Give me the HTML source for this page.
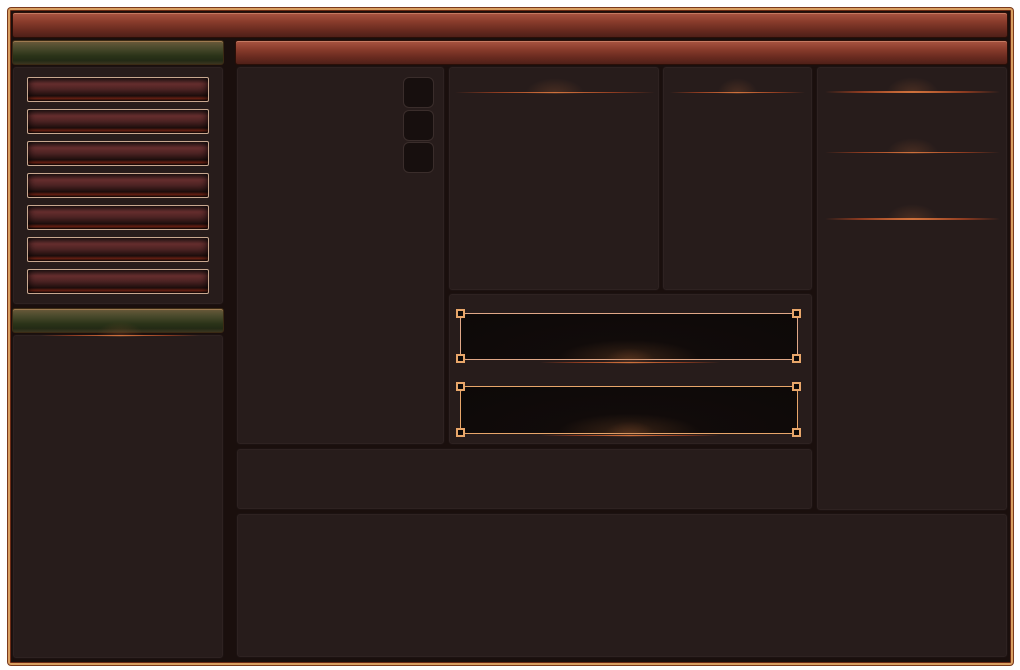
<!DOCTYPE html>
<html><head><meta charset="utf-8"><style>
*{margin:0;padding:0;box-sizing:border-box}
body{width:1020px;height:670px;background:#fff;position:relative;overflow:hidden;font-family:"Liberation Sans",sans-serif}
.a{position:absolute}
.frame{left:8px;top:8px;width:1005px;height:657px;background:#1a0f0d;border:2px solid #d9a062;box-shadow:0 0 0 1px #7a3a1c, inset 0 0 0 1px #6b2a14;border-radius:3px}
.p{position:absolute;background:#271c1b;border:1px solid #1c1211;border-radius:4px;box-shadow:inset 0 0 0 1px #2e2221}
.hdr{position:absolute;border-radius:3px;border:1px solid #2a0f08}
.red{background:linear-gradient(#a95441 0%,#8a3c2c 35%,#6a2b20 70%,#4f2018 100%);box-shadow:inset 0 1px 0 #c57a62}
.green{background:linear-gradient(#6b5a3a 0%,#4a4a2c 30%,#2a3318 65%,#232a15 85%,#3b3520 100%);box-shadow:inset 0 1px 0 #9d7a50;border-color:#3a2a14}
.btn{position:absolute;left:27px;width:182px;height:25px;border:1px solid #c8a890;border-radius:2px;background:linear-gradient(#3a2020 0%,#6a3030 25%,#4a2222 50%,#1e0e0d 78%,#8a2a18 90%,#1a0c0b 100%);box-shadow:inset 0 0 8px #000}
.sq{position:absolute;left:403px;width:31px;height:31px;background:#170f0e;border:1px solid #3a2d2b;border-radius:6px}
.glow{position:absolute;height:2px;background:linear-gradient(90deg,transparent,#8a3a20 20%,#e07a40 50%,#8a3a20 80%,transparent)}
.glow:before{content:"";position:absolute;left:35%;width:30%;top:-14px;height:16px;background:radial-gradient(ellipse at bottom,rgba(160,90,50,.3),transparent 70%)}
.box{position:absolute;left:460px;width:338px;background:radial-gradient(ellipse at 50% 100%,#3a2416 0%,#110b0a 30%,#0d0908 100%);border:1.5px solid #e8a66a;border-radius:6px}
.c{position:absolute;width:9px;height:9px;border:2px solid #e8a66a;background:#0d0908}
</style></head><body>
<div class="a frame"></div>
<div class="hdr red" style="left:12px;top:12px;width:996px;height:26px"></div>
<div class="hdr green" style="left:12px;top:40px;width:212px;height:25px"></div>
<div class="p" style="left:12px;top:66px;width:212px;height:239px"></div>
<div class="btn" style="top:77px"></div>
<div class="btn" style="top:109px"></div>
<div class="btn" style="top:141px"></div>
<div class="btn" style="top:173px"></div>
<div class="btn" style="top:205px"></div>
<div class="btn" style="top:237px"></div>
<div class="btn" style="top:269px"></div>
<div class="hdr green" style="left:12px;top:308px;width:212px;height:25px"></div>
<div class="p" style="left:12px;top:334px;width:212px;height:325px"></div>
<div class="glow" style="left:40px;top:335px;width:160px;height:1px"></div>
<div class="hdr red" style="left:235px;top:40px;width:773px;height:25px"></div>
<div class="p" style="left:236px;top:66px;width:209px;height:379px"></div>
<div class="sq" style="top:77px"></div>
<div class="sq" style="top:110px"></div>
<div class="sq" style="top:142px"></div>
<div class="p" style="left:448px;top:66px;width:212px;height:225px"></div>
<div class="glow" style="left:455px;top:92px;width:200px;height:1px"></div>
<div class="p" style="left:662px;top:66px;width:151px;height:225px"></div>
<div class="glow" style="left:670px;top:92px;width:135px;height:1px"></div>
<div class="p" style="left:816px;top:66px;width:192px;height:445px"></div>
<div class="glow" style="left:825px;top:91px;width:175px"></div>
<div class="glow" style="left:825px;top:152px;width:175px;height:1px"></div>
<div class="glow" style="left:825px;top:218px;width:175px"></div>
<div class="p" style="left:448px;top:293px;width:365px;height:152px"></div>
<div class="box" style="top:313px;height:47px;border-color:#e0a888"></div>
<div class="box" style="top:386px;height:48px"></div>
<div class="c" style="left:456px;top:309px"></div><div class="c" style="left:792px;top:309px"></div>
<div class="c" style="left:456px;top:354px"></div><div class="c" style="left:792px;top:354px"></div>
<div class="c" style="left:456px;top:382px"></div><div class="c" style="left:792px;top:382px"></div>
<div class="c" style="left:456px;top:428px"></div><div class="c" style="left:792px;top:428px"></div>
<div class="glow" style="left:540px;top:362px;width:180px;height:1px"></div>
<div class="glow" style="left:540px;top:435px;width:180px;height:1px"></div>
<div class="p" style="left:236px;top:448px;width:577px;height:62px"></div>
<div class="p" style="left:236px;top:513px;width:772px;height:145px"></div>
</body></html>
